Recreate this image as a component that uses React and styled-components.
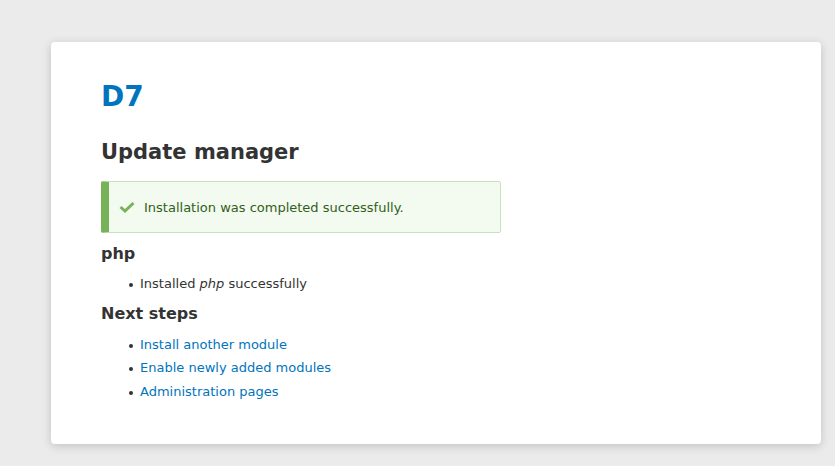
import React from "react";
import styled, { createGlobalStyle } from "styled-components";

const Global = createGlobalStyle`
  html, body {
    margin: 0;
    padding: 0;
    background: #ebebeb;
    font-family: "DejaVu Sans", "Liberation Sans", sans-serif;
    color: #333;
  }
`;

const Page = styled.div`
  min-height: 466px;
  padding: 42px 14px 22px 51px;
  box-sizing: border-box;
`;

const Card = styled.main`
  background: #fff;
  border-radius: 4px;
  box-shadow: 0 2px 10px rgba(0, 0, 0, 0.18);
  height: 402px;
  box-sizing: border-box;
  padding: 38px 50px 0;
`;

const SiteName = styled.h1`
  margin: 0;
  font-size: 28px;
  line-height: 34px;
  font-weight: bold;
  color: #0074bd;
`;

const Title = styled.h2`
  margin: 23px 0 0;
  font-size: 21px;
  line-height: 30px;
  font-weight: bold;
  color: #333;
`;

const Message = styled.div`
  margin-top: 14px;
  width: 400px;
  height: 52px;
  box-sizing: border-box;
  display: flex;
  align-items: center;
  gap: 9px;
  padding-left: 10px;
  background: #f3faef;
  border: 1px solid #c9e1bd;
  border-left: 8px solid #77b259;
  border-radius: 2px;
  color: #325e1c;
  font-size: 13px;
`;

const Section = styled.h3`
  margin: ${({ $top }) => $top}px 0 0;
  font-size: 16px;
  line-height: 22px;
  font-weight: bold;
  color: #333;
`;

const List = styled.ul`
  margin: ${({ $top }) => $top}px 0 0;
  padding: 0 0 0 39px;
  list-style: none;
`;

const Item = styled.li`
  position: relative;
  font-size: 13px;
  line-height: 23.5px;
  color: #333;
  &::before {
    content: "";
    position: absolute;
    left: -11px;
    top: 11px;
    width: 4px;
    height: 4px;
    border-radius: 50%;
    background: #333;
  }
`;

const Link = styled.a`
  color: #0074bd;
  text-decoration: none;
`;

const Check = () => (
  <svg width="16" height="14" viewBox="0 0 16 14">
    <path
      d="M1.5 7 L6 11 L14.5 3"
      fill="none"
      stroke="#77b259"
      strokeWidth="3"
    />
  </svg>
);

export default function App() {
  return (
    <>
      <Global />
      <Page>
        <Card>
          <SiteName>D7</SiteName>
          <Title>Update manager</Title>
          <Message>
            <Check />
            Installation was completed successfully.
          </Message>
          <Section $top={10}>php</Section>
          <List $top={7}>
            <Item>
              Installed <em>php</em> successfully
            </Item>
          </List>
          <Section $top={7}>Next steps</Section>
          <List $top={8}>
            <Item>
              <Link href="#">Install another module</Link>
            </Item>
            <Item>
              <Link href="#">Enable newly added modules</Link>
            </Item>
            <Item>
              <Link href="#">Administration pages</Link>
            </Item>
          </List>
        </Card>
      </Page>
    </>
  );
}
